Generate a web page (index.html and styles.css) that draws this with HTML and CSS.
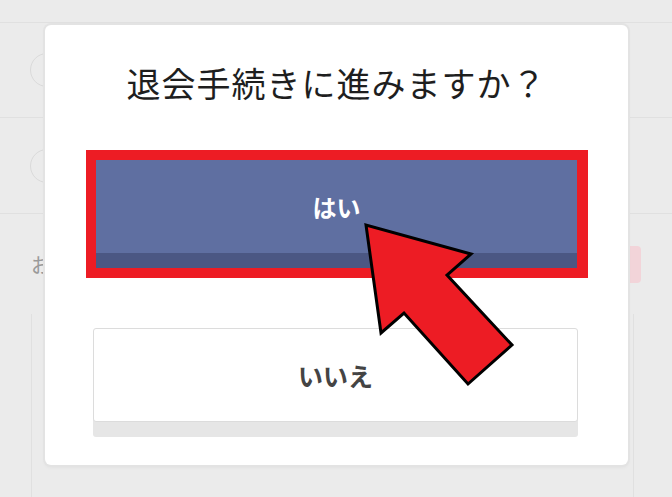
FILE: index.html
```html
<!DOCTYPE html>
<html lang="ja">
<head>
<meta charset="UTF-8">
<meta name="viewport" content="width=device-width, initial-scale=1.0">
<title>退会手続き</title>
<link rel="stylesheet" href="styles.css">
</head>
<body>
<!-- page behind the dialog -->
<div class="page">
  <div class="topbar"></div>
  <div class="row"><span class="avatar"></span></div>
  <div class="row row-second"><span class="avatar"></span></div>
  <div class="notice">
    <span class="notice-label">お知らせ</span>
    <span class="badge"></span>
  </div>
  <div class="card"></div>
</div>

<!-- confirm dialog -->
<div class="modal">
  <p class="modal-title">退会手続きに進みますか？</p>
  <div class="highlight">
    <button class="btn-yes">はい</button>
  </div>
  <button class="btn-no">いいえ</button>
</div>

<!-- annotation arrow -->
<svg class="arrow" width="672" height="497" viewBox="0 0 672 497">
  <polygon points="366,225 381,333 404,313 468,384 512,345 447,275 471,254"
           fill="#ed1c24" stroke="#000" stroke-width="3" stroke-linejoin="miter"/>
</svg>
</body>
</html>
```

FILE: styles.css
```css
body {
  margin: 0;
  background-color: #ebebeb;
  font-family: "Noto Sans CJK JP", "Noto Sans", sans-serif;
  width: 672px;
  height: 497px;
  overflow: hidden;
  position: relative;
}

/* background page */
.topbar {
  height: 22px;
  border-bottom: 1px solid #e0e0e0;
}
.row {
  height: 94px;
  border-bottom: 1px solid #e0e0e0;
  display: flex;
  align-items: center;
  padding-left: 30px;
}
.row-second {
  height: 95px;
}
.avatar {
  width: 34px;
  height: 34px;
  border-radius: 50%;
  border: 1px solid #dadada;
  box-sizing: border-box;
}
.notice {
  height: 100px;
  display: flex;
  align-items: center;
  justify-content: space-between;
  padding: 0 31px;
}
.notice-label {
  font-size: 20px;
  color: #9a9a9a;
}
.badge {
  width: 60px;
  height: 37px;
  border-radius: 4px;
  background-color: #f2d4d9;
}
.card {
  margin: 0 38px 0 31px;
  height: 200px;
  border-left: 1px solid #e0e0e0;
  border-right: 1px solid #e0e0e0;
}

/* dialog */
.modal {
  position: absolute;
  left: 45px;
  top: 25px;
  width: 583px;
  height: 440px;
  box-sizing: border-box;
  background-color: #fff;
  border-radius: 6px;
  box-shadow: 0 0 0 2px #e3e3e3, 0 2px 4px rgba(0, 0, 0, 0.06);
  padding-top: 35px;
  display: flex;
  flex-direction: column;
}
.modal-title {
  margin: 0;
  text-align: center;
  font-size: 34px;
  line-height: 46px;
  color: #1e1e1e;
  letter-spacing: 1px;
}
.highlight {
  margin: 44px 0 0 41px;
  width: 502px;
  height: 128px;
  box-sizing: border-box;
  border: 10px solid #ed1c24;
  border-right-width: 11px;
  display: flex;
}
.btn-yes {
  flex: 1;
  border: none;
  background-color: #5f6fa1;
  box-shadow: inset 0 -15px 0 #4b5783;
  padding: 0 0 15px;
  color: #fff;
  font-family: inherit;
  font-size: 24px;
  font-weight: bold;
}
.btn-no {
  margin: 50px 0 0 48px;
  width: 485px;
  height: 94px;
  background-color: #fff;
  border: 1px solid #dcdcdc;
  border-radius: 3px;
  box-shadow: 0 15px 0 #e6e6e6;
  color: #444;
  font-family: inherit;
  font-size: 25px;
  font-weight: bold;
}

/* annotation */
.arrow {
  position: absolute;
  left: 0;
  top: 0;
  pointer-events: none;
}
```
